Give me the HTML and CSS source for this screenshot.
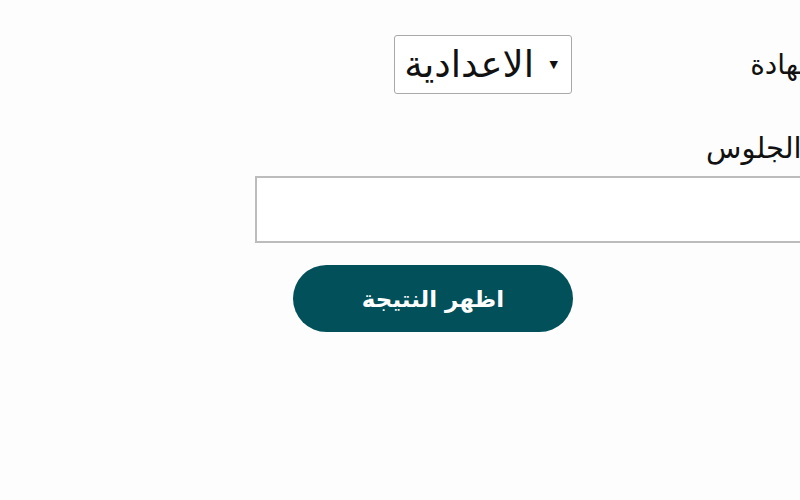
FILE: index.html
```html
<!DOCTYPE html>
<html lang="ar">
<head>
<meta charset="utf-8">
<title>نتيجة الشهادة</title>
<link rel="stylesheet" href="styles.css">
</head>
<body>
<form class="page" dir="rtl">
  <div class="row-cert">
    <label class="label label-cert" for="cert">الشهادة</label>
    <div class="select-box">
      <span class="arrow">▼</span>
      <select id="cert" class="select">
        <option>الاعدادية</option>
      </select>
    </div>
  </div>
  <label class="label label-seat" for="seat">رقم الجلوس</label>
  <input id="seat" class="input" type="text">
  <button type="button" class="btn">اظهر النتيجة</button>
</form>
</body>
</html>
```
FILE: styles.css
```css
html, body {
  margin: 0;
  padding: 0;
  background: #fdfdfd;
  overflow: hidden;
}
body {
  width: 800px;
  height: 500px;
}
.page {
  width: 858px;
  padding-top: 35px;
  font-family: "DejaVu Sans", sans-serif;
  color: #111;
  display: flex;
  flex-direction: column;
  align-items: flex-start;
}
.row-cert {
  display: flex;
  align-items: center;
}
.label {
  font-size: 28px;
  line-height: 1;
}
.label-cert {
  width: 268px;
  padding-right: 18px;
  flex: none;
}
.label-seat {
  font-size: 29px;
  margin-top: 40px;
}
.select-box {
  width: 176px;
  height: 57px;
  border: 1px solid #a9a9a9;
  border-radius: 3px;
  background: #fff;
  display: flex;
  align-items: center;
  box-sizing: content-box;
}
.arrow {
  font-size: 11px;
  width: 12px;
  margin-right: 13px;
  margin-left: 12px;
  color: #111;
}
.select {
  appearance: none;
  -webkit-appearance: none;
  border: none;
  background: transparent;
  font-family: "DejaVu Sans", sans-serif;
  font-size: 37px;
  line-height: 1;
  color: #111;
  padding: 0 0 0 4px;
  flex: 1;
  min-width: 0;
  direction: rtl;
  outline: none;
}
.input {
  margin-top: 13px;
  width: 603px;
  height: 67px;
  border: 2px solid #bcbcbc;
  padding: 0;
  box-sizing: border-box;
  background: #fff;
}
.btn {
  margin-top: 22px;
  margin-right: 285px;
  width: 280px;
  height: 67px;
  border: none;
  border-radius: 34px;
  background: #01505a;
  color: #fff;
  font-family: "DejaVu Sans", sans-serif;
  font-weight: bold;
  font-size: 23px;
  padding: 0;
}
```
